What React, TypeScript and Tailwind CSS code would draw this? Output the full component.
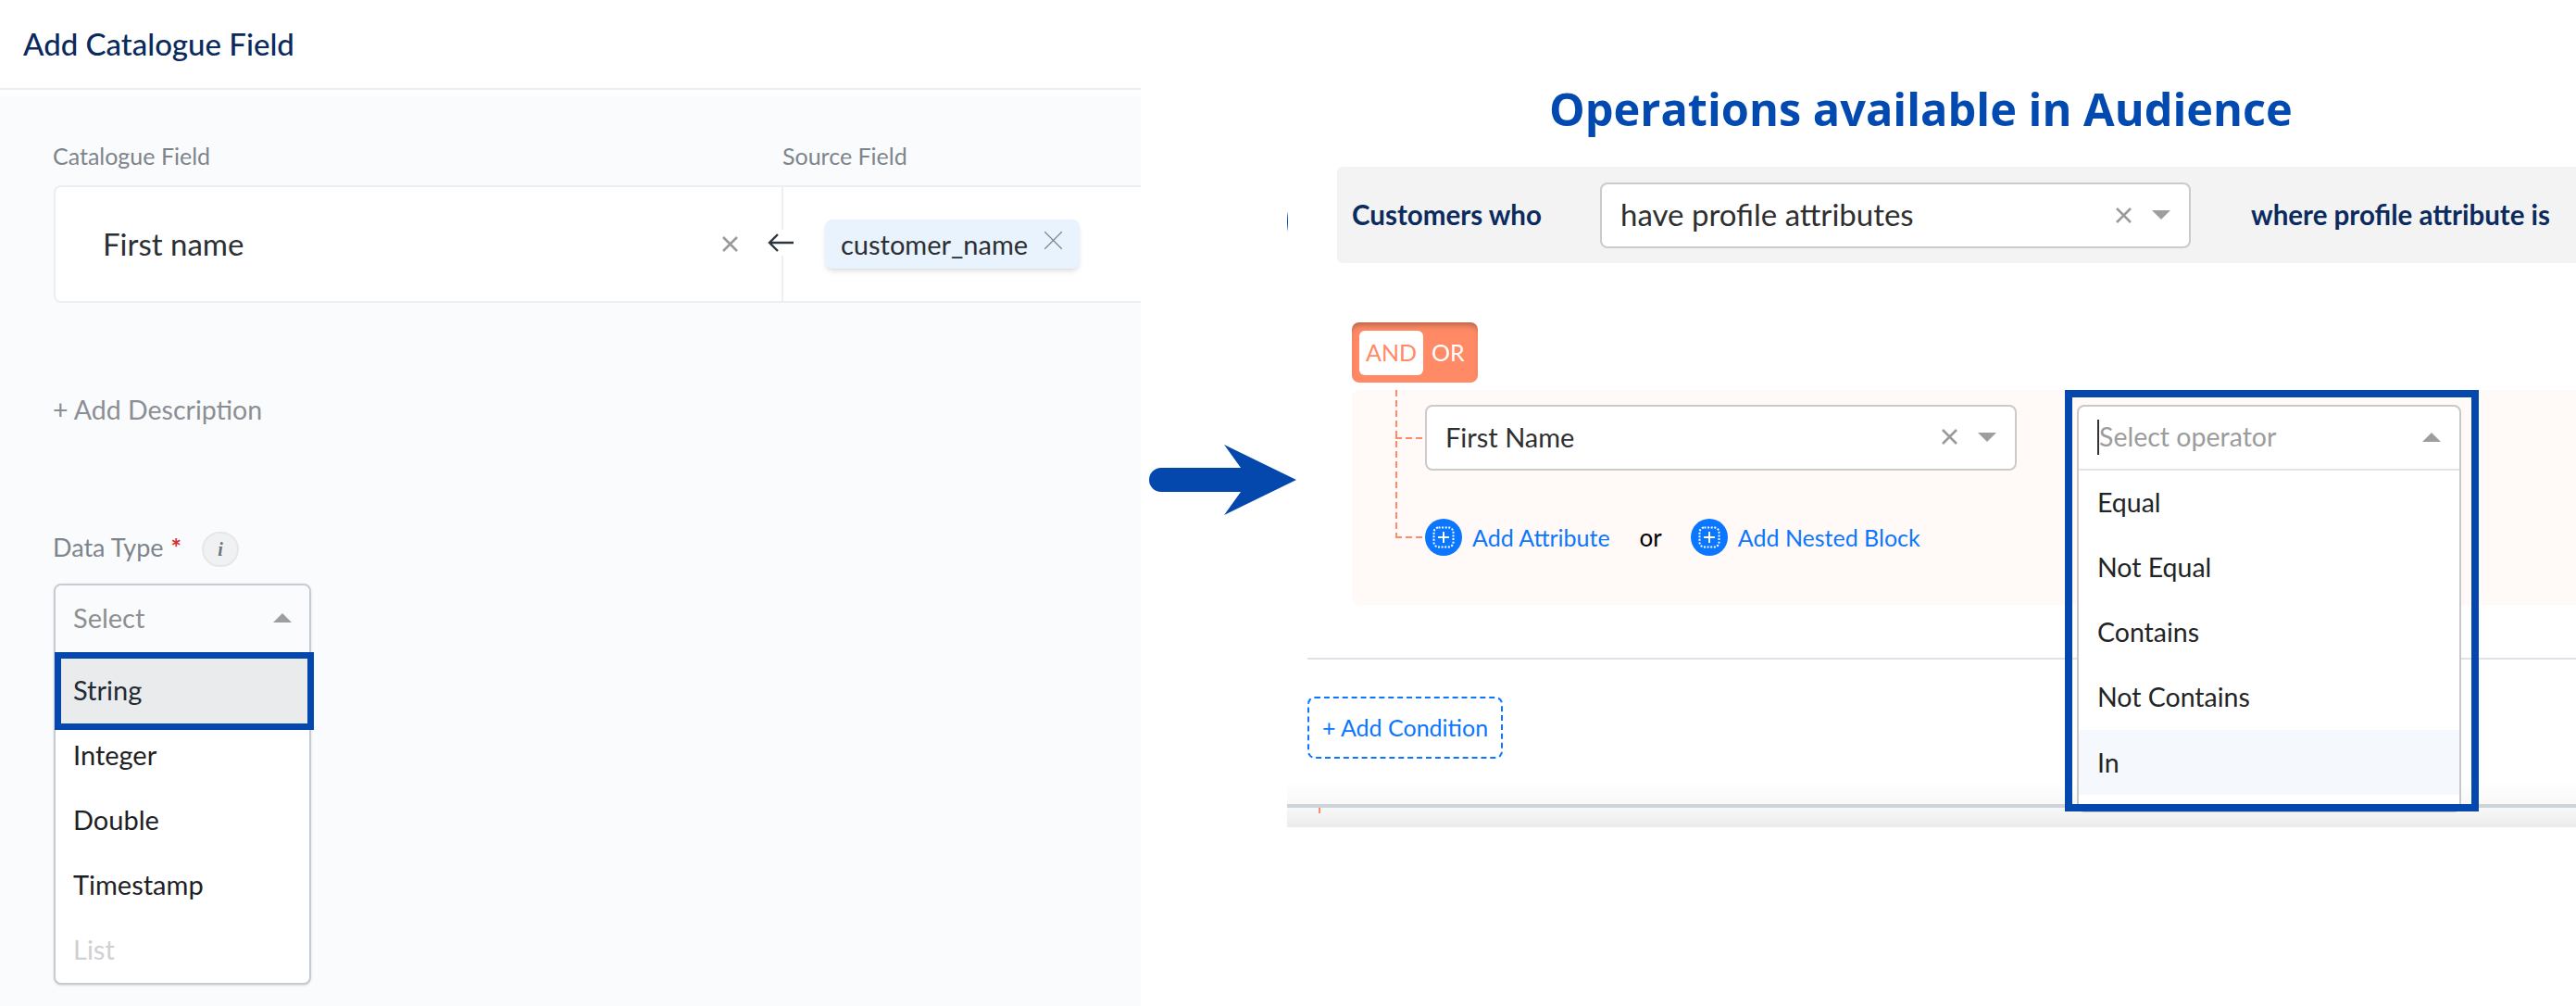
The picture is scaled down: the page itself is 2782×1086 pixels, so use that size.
import { ReactNode } from 'react';

const FONT = "font-['Lato','Noto_Sans',sans-serif]";
const SELECT_BORDER = 'border-2 border-[#cbcbcb] rounded-lg bg-white';
const DASH_V = 'bg-[repeating-linear-gradient(to_bottom,#ff8a65_0_7px,transparent_7px_11px)]';
const DASH_H = 'bg-[repeating-linear-gradient(to_right,#ff8a65_0_7px,transparent_7px_11px)]';

function CloseIcon({ className = 'w-[17px] h-[17px]', width = 2.6, color = '#9a9a9a' }: { className?: string; width?: number; color?: string }) {
  return (
    <svg viewBox="0 0 17 17" className={className}>
      <path d="M1 1 16 16M16 1 1 16" stroke={color} strokeWidth={width} fill="none" />
    </svg>
  );
}

function Triangle({ up = false }: { up?: boolean }) {
  return (
    <svg viewBox="0 0 20 10" className="w-5 h-[10px]">
      <path d={up ? 'M10 0 20 10H0Z' : 'M0 0H20L10 10Z'} fill="#9e9e9e" />
    </svg>
  );
}

function PlusBadge() {
  return (
    <span className="w-10 h-10 shrink-0 rounded-full bg-[#0b76ff] flex items-center justify-center">
      <svg viewBox="0 0 24 24" className="w-6 h-6" fill="none" stroke="#fff">
        <rect x="1.5" y="1.5" width="21" height="21" rx="5" strokeWidth="2" strokeDasharray="2 1.6" />
        <path d="M12 6v12M6 12h12" strokeWidth="2" />
      </svg>
    </span>
  );
}

function AddLink({ children }: { children: ReactNode }) {
  return (
    <div className="flex items-center gap-[11px]">
      <PlusBadge />
      <span className="text-[25px] leading-10 text-[#0b76ff]">{children}</span>
    </div>
  );
}

function CatalogueForm() {
  const types = ['Integer', 'Double', 'Timestamp'];
  return (
    <section className="w-[1232px] shrink-0 flex flex-col">
      <header className="h-[97px] shrink-0 border-b-2 border-[#ececec] pl-[25px] flex items-center">
        <h1 className="text-[33px] text-[#0a2a5e] font-medium">Add Catalogue Field</h1>
      </header>
      <div className="mt-[7px] flex-1 bg-[#fafbfd] pl-[58px] pt-[50px]">
        <div className="h-7 flex -ml-px text-[25px] leading-7 text-[#7d858c]">
          <span className="w-[788px]">Catalogue Field</span>
          <span>Source Field</span>
        </div>
        <div className="mt-[18px] h-[127px] flex bg-white border-y-2 border-l-2 border-[#eeeeee] rounded-l-lg">
          <div className="w-[784px] pl-[51px] pr-[47px] flex items-center justify-between">
            <span className="text-[33px] text-[#2b2f33]">First name</span>
            <CloseIcon />
          </div>
          <div className="relative flex-1 border-l-2 border-[#eeeeee] flex items-center pl-[45px]">
            <span className="absolute -left-[18px] top-[46px] w-[30px] h-[28px] bg-white flex items-center justify-center">
              <svg viewBox="0 0 28 22" className="w-7 h-[22px]" fill="none" stroke="#2c3640" strokeWidth="2.4">
                <path d="M28 11H2M11 2 2 11l9 9" />
              </svg>
            </span>
            <div className="w-[275px] h-[53px] pl-[17px] pr-[18px] bg-[#e9f3fd] rounded-lg shadow-md flex items-center justify-between">
              <span className="text-[29px] text-[#2b2f33]">customer_name</span>
              <CloseIcon className="w-[21px] h-[21px] -mt-2" width={1} color="#7c8287" />
            </div>
          </div>
        </div>
        <div className="mt-[99px] -ml-px text-[28.5px] leading-8 text-[#8a8f94]">+ Add Description</div>
        <div className="mt-[116px] h-[38px] -ml-px flex items-center text-[27px] text-[#7d858c]">
          <span className="pb-[3px]">Data Type</span>
          <span className="ml-[8px] -mt-1 text-[#d32f2f] font-bold">*</span>
          <span className="ml-[22px] w-10 h-[38px] rounded-full bg-[#f0f1f2] border-2 border-[#e6e7e8] flex items-center justify-center font-['Liberation_Serif',serif] text-[20px] font-bold italic text-[#6d757c]">
            i
          </span>
        </div>
        <div className="mt-[18px] w-[278px] h-[433px] border-2 border-[#c6ccd3] rounded-lg shadow-sm bg-white overflow-visible">
          <div className="h-[72px] px-[19px] pb-[2px] flex items-center justify-between bg-[#fafbfd] rounded-t-lg">
            <span className="text-[29px] text-[#8f8f8f]">Select</span>
            <Triangle up />
          </div>
          <div className="h-[7px] bg-[#fafbfd]" />
          <div className="h-[70px] ml-[6px] w-[266px] pl-[13px] pb-[2px] flex items-center bg-[#e9ebed] outline-[7px] outline-[#0448ad] text-[29px] text-[#1f2a33]">
            String
          </div>
          {types.map((t) => (
            <div key={t} className="h-[70px] pl-[19px] pb-[2px] flex items-center text-[29px] text-[#1e2124]">
              {t}
            </div>
          ))}
          <div className="h-[70px] pl-[19px] pb-[2px] flex items-center text-[29px] text-[#cfd0d2]">List</div>
        </div>
      </div>
    </section>
  );
}

function BigArrow() {
  return (
    <div className="w-[158px] shrink-0 pl-[9px] pt-[480px]">
      <svg viewBox="0 0 159 76" className="w-[159px] h-[76px] overflow-visible">
        <path d="M13 25H99L81 0 159 38 81 76 99 51H13A13 13 0 0 1 13 25Z" fill="#0448ad" />
      </svg>
    </div>
  );
}

function OperatorDropdown() {
  const ops = ['Equal', 'Not Equal', 'Contains', 'Not Contains'];
  return (
    <div className="relative ml-[65px] w-[415px] h-[71px]">
      <div className="absolute z-10 left-0 top-0 w-full h-[440px] border-2 border-[#c8c8c8] rounded-lg bg-white">
        <div className="h-[69px] border-b-2 border-[#e4e4e4] px-[20px] pb-[2px] flex items-center justify-between">
          <span className="flex items-center text-[28.5px] text-[#9c9c9c]">
            <span className="w-[2px] h-[38px] bg-[#333]" />
            Select operator
          </span>
          <Triangle up />
        </div>
        {ops.map((o) => (
          <div key={o} className="h-[70px] pl-[20px] pb-[2px] flex items-center text-[28.5px] text-[#222426]">
            {o}
          </div>
        ))}
        <div className="h-[70px] pl-[20px] flex items-center bg-[#f5f9fd] text-[28.5px] text-[#222426]">In</div>
      </div>
      <div className="absolute z-20 -left-[13px] -top-[16px] w-[447px] h-[455px] border-[8px] border-[#0448ad] pointer-events-none" />
    </div>
  );
}

function AudiencePanel() {
  return (
    <section className="relative flex-1 flex flex-col">
      <h2 className="h-[180px] shrink-0 pl-[283px] pt-[87px] font-['Open_Sans',sans-serif] text-[48.7px] leading-[60px] font-bold text-[#034ab0] whitespace-nowrap">
        Operations available in Audience
      </h2>
      <svg viewBox="0 0 2 22" className="absolute left-0 top-[228px] w-[2px] h-[22px]">
        <path d="M0 0Q2 11 0 22Z" fill="#0448ad" />
      </svg>
      <div className="ml-[54px] h-[104px] shrink-0 pl-[16px] flex items-center bg-[#f3f3f3] rounded-l-md">
        <span className="w-[268px] text-[29.5px] font-bold text-[#0b2b5e]">Customers who</span>
        <div className={`w-[638px] h-[71px] px-[20px] flex items-center ${SELECT_BORDER}`}>
          <span className="flex-1 text-[33px] text-[#2f2f2f]">have profile attributes</span>
          <CloseIcon />
          <span className="ml-[22px]">
            <Triangle />
          </span>
        </div>
        <span className="ml-[65px] text-[29.5px] font-bold text-[#0b2b5e]">where profile attribute is</span>
      </div>
      <div className="mt-[64px] ml-[70px] w-[136px] h-[65px] shrink-0 px-2 flex items-center gap-[9px] rounded-lg bg-[#ff8a65] shadow-[inset_0_6px_6px_-3px_rgba(120,70,50,0.55)]">
        <span className="w-[69px] h-[48px] rounded-md bg-white text-[#ff8a65] text-[25px] flex items-center justify-center">AND</span>
        <span className="text-white text-[25px]">OR</span>
      </div>
      <div className="relative mt-2 ml-[70px] h-[232px] shrink-0 pl-[79px] pt-4 bg-[#fff9f7] rounded-l-lg">
        <span className={`absolute left-[47px] top-0 w-[2px] h-[160px] ${DASH_V}`} />
        <span className={`absolute left-[47px] top-[51px] w-8 h-[2px] ${DASH_H}`} />
        <span className={`absolute left-[47px] top-[158px] w-8 h-[2px] ${DASH_H}`} />
        <div className="flex">
          <div className={`w-[639px] h-[71px] pl-[20px] pr-[20px] pb-[2px] flex items-center ${SELECT_BORDER}`}>
            <span className="flex-1 text-[29px] text-[#2f2f2f]">First Name</span>
            <CloseIcon />
            <span className="ml-[22px]">
              <Triangle />
            </span>
          </div>
          <OperatorDropdown />
        </div>
        <div className="mt-[52px] flex items-center">
          <AddLink>Add Attribute</AddLink>
          <span className="ml-[32px] mr-[31px] text-[26px] text-black">or</span>
          <AddLink>Add Nested Block</AddLink>
        </div>
      </div>
      <div className="mt-[57px] ml-[22px] h-[2px] shrink-0 bg-[#dde2e8]" />
      <div className="mt-[40px] ml-[22px] w-[211px] h-[67px] shrink-0 flex items-center justify-center border-2 border-dashed border-[#0b76ff] rounded-lg text-[25px] text-[#0b76ff]">
        + Add Condition
      </div>
      <div className="relative mt-[24px] shrink-0">
        <div className="h-[25px] bg-gradient-to-b from-white to-[#f8f8f8]" />
        <div className="h-1 bg-[#cfd4d8]" />
        <div className="h-[21px] bg-gradient-to-b from-[#f8f8f8] to-[#ebebeb]" />
        <span className="absolute left-[34px] top-[29px] w-[2px] h-[6px] bg-[#ff8a65]" />
      </div>
    </section>
  );
}

export default function App() {
  return (
    <div className={`flex w-[2782px] h-[1086px] overflow-hidden bg-white ${FONT}`}>
      <CatalogueForm />
      <BigArrow />
      <AudiencePanel />
    </div>
  );
}
